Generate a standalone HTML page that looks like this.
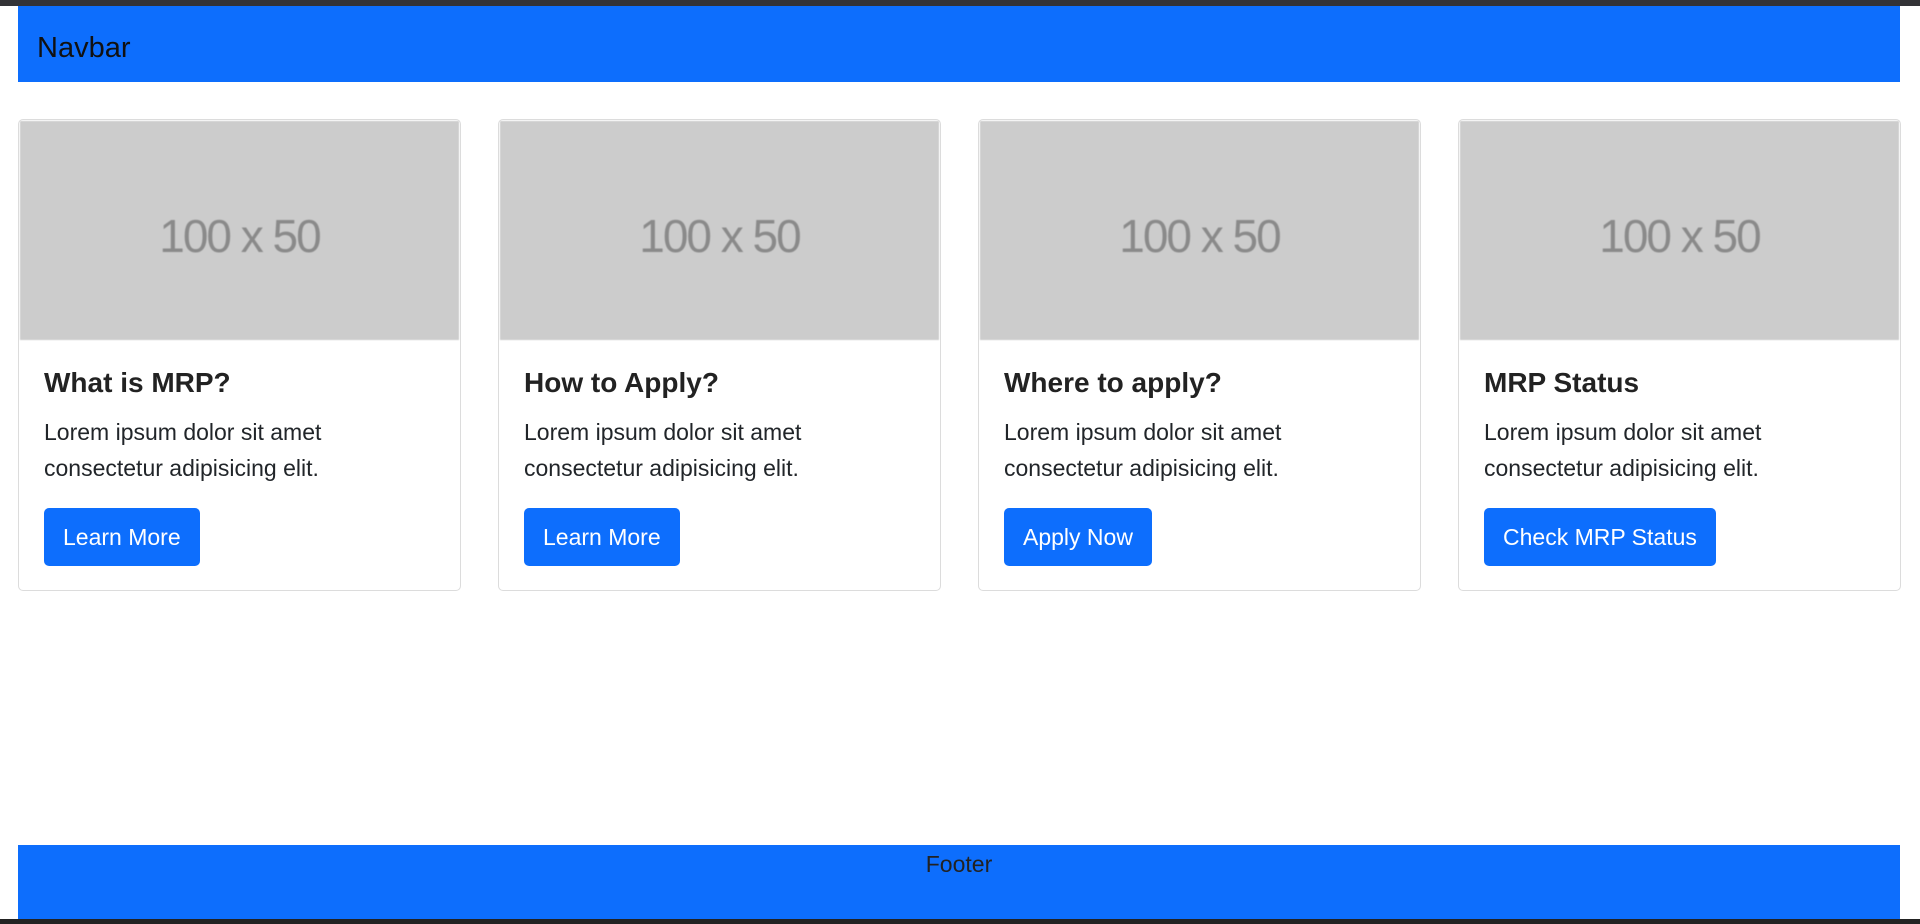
<!DOCTYPE html>
<html><head><meta charset="utf-8"><style>
*{box-sizing:border-box;margin:0;padding:0}
body{width:1920px;height:924px;background:#fff;font-family:"Liberation Sans",sans-serif;color:#212529;position:relative;overflow:hidden}
.top{position:absolute;left:0;top:0;width:1920px;height:6px;background:#333337}
.nav{position:absolute;left:18px;top:6px;width:1882px;height:76px;background:#0d6efd;font-size:29px;color:#111;padding:0 0 0 19px;line-height:84px}
.card{position:absolute;top:119px;width:443px;height:472px;border:1px solid #dcdcdc;border-radius:5px;overflow:hidden}
.img{height:219px;margin:1px 1px 0;background:#ccc;display:flex;align-items:center;justify-content:center;font-size:46px;color:#8a8a8a;letter-spacing:-2px;filter:blur(.6px);padding-top:11px}
.body{padding:0 0 0 25px}
h5{font-size:28px;font-weight:bold;margin-top:28px;line-height:30px;color:#222}
p{font-size:23px;line-height:36px;margin-top:16px}
.btn{display:block;width:fit-content;margin-top:22px;background:#0d6efd;color:#fff;font-size:23px;height:58px;line-height:58px;padding:0 19px;border-radius:5px}
.foot{position:absolute;left:18px;top:845px;width:1882px;height:74px;background:#0d6efd;text-align:center;font-size:23px;color:#222;padding-top:6px}
.bot{position:absolute;left:0;top:919px;width:1920px;height:5px;background:#222}
</style></head><body>
<div class="top"></div>
<div class="nav">Navbar</div>
<div class="card" style="left:18px"><div class="img">100 x 50</div><div class="body"><h5>What is MRP?</h5><p>Lorem ipsum dolor sit amet<br>consectetur adipisicing elit.</p><span class="btn">Learn More</span></div></div>
<div class="card" style="left:498px"><div class="img">100 x 50</div><div class="body"><h5>How to Apply?</h5><p>Lorem ipsum dolor sit amet<br>consectetur adipisicing elit.</p><span class="btn">Learn More</span></div></div>
<div class="card" style="left:978px"><div class="img">100 x 50</div><div class="body"><h5>Where to apply?</h5><p>Lorem ipsum dolor sit amet<br>consectetur adipisicing elit.</p><span class="btn">Apply Now</span></div></div>
<div class="card" style="left:1458px"><div class="img">100 x 50</div><div class="body"><h5>MRP Status</h5><p>Lorem ipsum dolor sit amet<br>consectetur adipisicing elit.</p><span class="btn">Check MRP Status</span></div></div>
<div class="foot">Footer</div>
<div class="bot"></div>
</body></html>
